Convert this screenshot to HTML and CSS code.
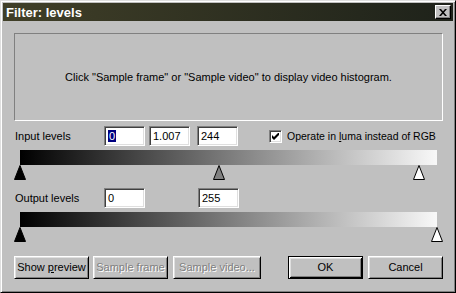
FILE: index.html
```html
<!DOCTYPE html>
<html lang="en">
<head>
  <meta charset="UTF-8">
  <title>Filter: levels</title>
  <link rel="stylesheet" href="styles.css">
</head>
<body>

<div class="window">

  <!-- Title bar -->
  <div class="titlebar">
    <span class="title">Filter: levels</span>
    <div class="close">
      <svg width="8" height="7" viewBox="0 0 8 7">
        <path d="M0 0h2l2 2.2 2-2.2h2L5 3.5 8 7H6L4 4.8 2 7H0l3-3.5z" fill="#000"/>
      </svg>
    </div>
  </div>

  <div class="content">

    <!-- Histogram area -->
    <div class="histogram">
      Click "Sample frame" or "Sample video" to display video histogram.
    </div>

    <!-- Input levels -->
    <div class="row">
      <span class="label">Input levels</span>
      <div class="field"><span class="sel">0</span></div>
      <div class="field gap-s">1.007</div>
      <div class="field gap-m">244</div>
      <div class="check">
        <svg width="7" height="7" viewBox="0 0 7 7">
          <path d="M0 2v3l2 2 5-5V-1L2 4z" fill="#000"/>
        </svg>
      </div>
      <span class="check-label">Operate in <u>l</u>uma instead of RGB</span>
    </div>
    <div class="bar"></div>
    <div class="thumbs">
      <svg class="thumb" style="left: 0%" viewBox="0 0 12 15"><polygon points="6,0.5 11.5,14.5 0.5,14.5" fill="#000" stroke="#000"/></svg>
      <svg class="thumb" style="left: 47.8%" viewBox="0 0 12 15"><polygon points="6,0.5 11.5,14.5 0.5,14.5" fill="#808080" stroke="#000"/></svg>
      <svg class="thumb" style="left: 95.7%" viewBox="0 0 12 15"><polygon points="6,0.5 11.5,14.5 0.5,14.5" fill="#fff" stroke="#000"/></svg>
    </div>

    <!-- Output levels -->
    <div class="row out">
      <span class="label">Output levels</span>
      <div class="field">0</div>
      <div class="field gap-l">255</div>
    </div>
    <div class="bar"></div>
    <div class="thumbs">
      <svg class="thumb" style="left: 0%" viewBox="0 0 12 15"><polygon points="6,0.5 11.5,14.5 0.5,14.5" fill="#000" stroke="#000"/></svg>
      <svg class="thumb" style="left: 100%" viewBox="0 0 12 15"><polygon points="6,0.5 11.5,14.5 0.5,14.5" fill="#fff" stroke="#000"/></svg>
    </div>

    <!-- Buttons -->
    <div class="buttons">
      <div class="btn">Show <u>p</u>review</div>
      <div class="btn disabled b-frame">Sample frame</div>
      <div class="btn disabled b-video">Sample video...</div>
      <div class="btn default b-ok">OK</div>
      <div class="btn b-cancel">Cancel</div>
    </div>

  </div>
</div>

</body>
</html>
```

FILE: styles.css
```css
body {
  margin: 0;
  background-color: #c0c0c0;
  font-family: "Liberation Sans", Arial, sans-serif;
  font-size: 11px;
  color: #000;
}

.window {
  width: 456px;
  height: 293px;
  box-sizing: border-box;
  border: 1px solid;
  border-color: #dfdfdf #000 #000 #dfdfdf;
  box-shadow: inset 1px 1px #fff, inset -1px -1px #808080;
  padding: 2px;
  background-color: #c0c0c0;
}

.titlebar {
  height: 18px;
  display: flex;
  align-items: center;
  justify-content: space-between;
  padding: 0 2px 0 3px;
  background: linear-gradient(to right, #403f28, #1e221a);
}

.title {
  color: #fff;
  font-weight: bold;
  font-size: 13px;
}

.close {
  width: 16px;
  height: 14px;
  box-sizing: border-box;
  display: flex;
  align-items: center;
  justify-content: center;
  background-color: #c0c0c0;
  border: 1px solid;
  border-color: #fff #000 #000 #fff;
  box-shadow: inset -1px -1px #808080;
}

.content {
  padding: 12px 10px 0 11px;
}

.histogram {
  height: 88px;
  box-sizing: border-box;
  border: 1px solid;
  border-color: #808080 #fff #fff #808080;
  display: flex;
  align-items: center;
  justify-content: center;
}

.row {
  display: flex;
  align-items: center;
  height: 20px;
  margin-top: 5px;
}

.row.out {
  margin-top: 8px;
}

.label {
  width: 89px;
  margin-left: 1px;
}

.field {
  width: 41px;
  height: 20px;
  box-sizing: border-box;
  background-color: #fff;
  border: 1px solid;
  border-color: #808080 #fff #fff #808080;
  box-shadow: inset 1px 1px #404040, inset -1px -1px #dfdfdf;
  padding: 3px 0 0 3px;
  line-height: 13px;
}

.sel {
  background-color: #000080;
  color: #fff;
  padding: 0 1px;
}

.gap-s {
  margin-left: 4px;
}

.gap-m {
  margin-left: 7px;
}

.gap-l {
  margin-left: 53px;
}

.check {
  width: 13px;
  height: 13px;
  box-sizing: border-box;
  margin-left: 31px;
  background-color: #fff;
  border: 1px solid;
  border-color: #808080 #fff #fff #808080;
  box-shadow: inset 1px 1px #404040, inset -1px -1px #dfdfdf;
  display: flex;
  align-items: center;
  justify-content: center;
}

.check-label {
  margin-left: 5px;
  font-size: 10.5px;
}

.bar {
  width: 417px;
  height: 15px;
  margin: 4px 0 0 6px;
  background: linear-gradient(to right, #000, #f8f8f8);
}

.thumbs {
  position: relative;
  width: 417px;
  height: 15px;
  margin-left: 6px;
}

.thumb {
  position: absolute;
  top: 0;
  width: 12px;
  height: 15px;
  margin-left: -6px;
}

.buttons {
  display: flex;
  margin-top: 14px;
}

.btn {
  width: 75px;
  height: 23px;
  box-sizing: border-box;
  border: 1px solid;
  border-color: #fff #000 #000 #fff;
  box-shadow: inset 1px 1px #dfdfdf, inset -1px -1px #808080;
  text-align: center;
  line-height: 21px;
  white-space: nowrap;
}

.btn.disabled {
  color: #808080;
  text-shadow: 1px 1px #fff;
}

.btn.default {
  border: 1px solid #000;
  box-shadow: inset 1px 1px #fff, inset -1px -1px #000, inset 2px 2px #dfdfdf, inset -2px -2px #808080;
}

.b-frame {
  margin-left: 4px;
}

.b-video {
  width: 88px;
  margin-left: 5px;
}

.b-ok {
  margin-left: 27px;
}

.b-cancel {
  margin-left: 5px;
}
```
